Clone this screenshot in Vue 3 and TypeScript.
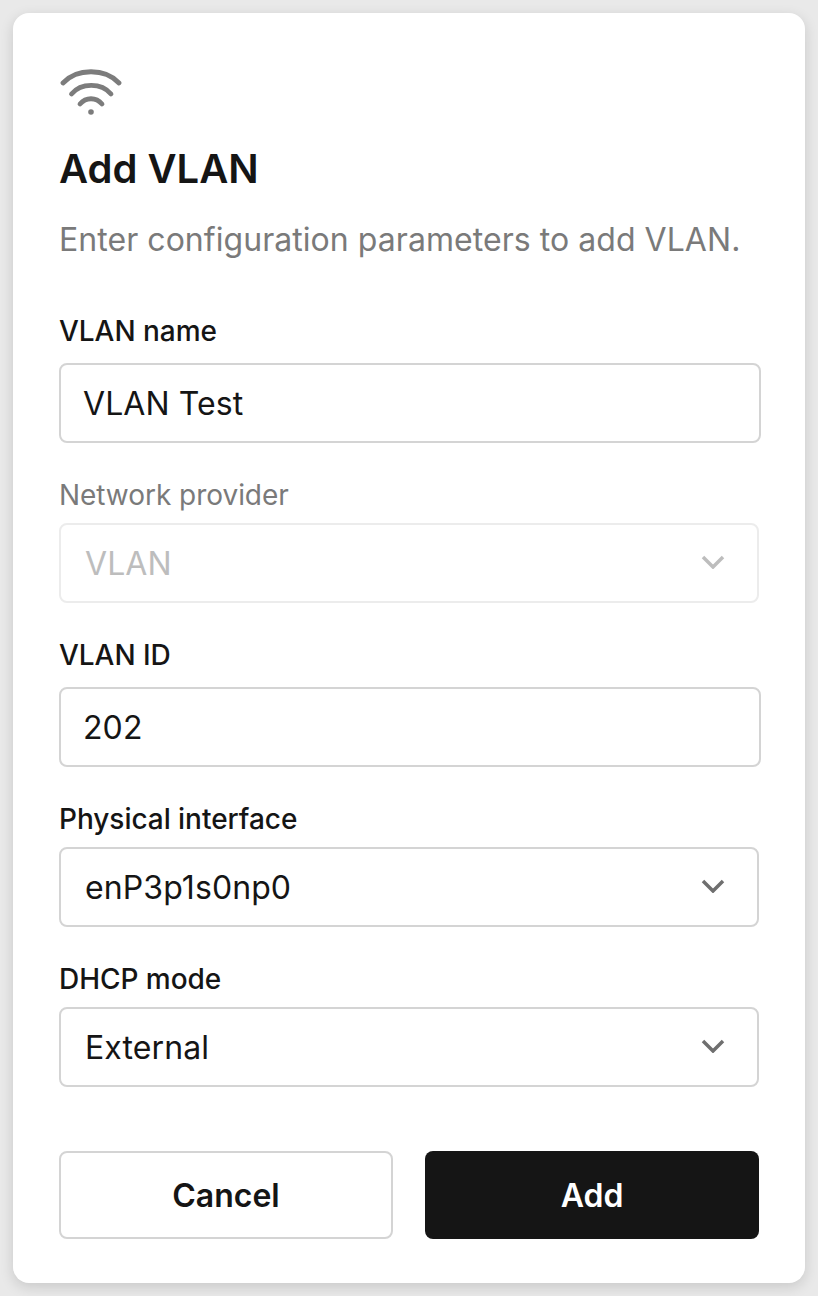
<script setup lang="ts">
import { ref } from "vue";

const vlanName = ref("VLAN Test");
const vlanId = ref("202");
const physicalInterface = ref("enP3p1s0np0");
const dhcpMode = ref("External");
</script>

<template>
  <main class="page">
    <form class="card" @submit.prevent>
      <svg class="wifi" width="62" height="48" viewBox="0 0 62 48" fill="none">
        <path d="M3 15C17 0 45 0 59 15" />
        <path d="M11.5 26C21 14.5 41.5 14.5 51 26" />
        <path d="M20 36C26 29 36 29 42 36" />
        <circle cx="31" cy="44" r="2.8" />
      </svg>
      <h1>Add VLAN</h1>
      <p class="hint">Enter configuration parameters to add VLAN.</p>

      <label class="field first">
        <span class="label">VLAN name</span>
        <input v-model="vlanName" class="control wide" type="text" />
      </label>

      <label class="field tight disabled">
        <span class="label">Network provider</span>
        <span class="select-wrap">
          <select class="control" disabled>
            <option>VLAN</option>
          </select>
          <svg class="chevron" width="24" height="14" viewBox="0 0 24 14" fill="none">
            <path d="M2 2L12 12L22 2" />
          </svg>
        </span>
      </label>

      <label class="field">
        <span class="label">VLAN ID</span>
        <input v-model="vlanId" class="control wide" type="text" />
      </label>

      <label class="field tight">
        <span class="label">Physical interface</span>
        <span class="select-wrap">
          <select v-model="physicalInterface" class="control">
            <option>enP3p1s0np0</option>
          </select>
          <svg class="chevron" width="24" height="14" viewBox="0 0 24 14" fill="none">
            <path d="M2 2L12 12L22 2" />
          </svg>
        </span>
      </label>

      <label class="field tight">
        <span class="label">DHCP mode</span>
        <span class="select-wrap">
          <select v-model="dhcpMode" class="control">
            <option>External</option>
          </select>
          <svg class="chevron" width="24" height="14" viewBox="0 0 24 14" fill="none">
            <path d="M2 2L12 12L22 2" />
          </svg>
        </span>
      </label>

      <div class="actions">
        <button type="button" class="btn cancel">Cancel</button>
        <button type="submit" class="btn add">Add</button>
      </div>
    </form>
  </main>
</template>

<style>
html,
body {
  margin: 0;
  background: #e9e9e9;
}
</style>

<style scoped>
.page {
  box-sizing: border-box;
  width: 818px;
  height: 1296px;
  padding: 13px;
  font-family: Inter, "Liberation Sans", sans-serif;
  color: #151515;
}

.card {
  box-sizing: border-box;
  width: 792px;
  height: 1270px;
  padding: 55px 46px 44px;
  display: flex;
  flex-direction: column;
  background: #fff;
  border-radius: 16px;
  box-shadow: 0 4px 14px rgba(0, 0, 0, 0.14);
}

.wifi {
  display: block;
  margin-left: 1px;
}
.wifi path {
  stroke: #7c7c7c;
  stroke-width: 4.8;
  stroke-linecap: round;
}
.wifi circle {
  fill: #7c7c7c;
}

h1 {
  margin: 27px 0 0;
  font-size: 40px;
  line-height: 52px;
  font-weight: 600;
}

.hint {
  margin: 21px 0 0;
  font-size: 32px;
  line-height: 48px;
  letter-spacing: 0.05px;
  color: #7a7a7a;
}

.field {
  display: flex;
  flex-direction: column;
  gap: 16px;
  margin-top: 36px;
}
.field.first {
  margin-top: 51px;
}
.field.tight {
  gap: 12px;
}

.label {
  font-size: 28px;
  line-height: 32px;
  font-weight: 500;
  letter-spacing: -0.04px;
}

.control {
  box-sizing: border-box;
  display: block;
  width: 700px;
  height: 80px;
  padding: 0 24px;
  border: 2px solid #d4d4d4;
  border-radius: 8px;
  background: #fff;
  font: 400 32px Inter, "Liberation Sans", sans-serif;
  letter-spacing: 0.1px;
  color: #151515;
  outline: none;
  appearance: none;
  opacity: 1;
}
.control.wide {
  width: 702px;
  padding-left: 22px;
}

.select-wrap {
  position: relative;
  display: block;
}
.chevron {
  position: absolute;
  top: 32px;
  right: 34px;
  pointer-events: none;
}
.chevron path {
  stroke: #6f6f6f;
  stroke-width: 3.5;
}

.disabled .label {
  color: #7a7a7a;
  font-weight: 400;
}
.disabled .control {
  border-color: #ececec;
  color: #bdbdbd;
}
.disabled .chevron path {
  stroke: #bdbdbd;
}

.actions {
  display: grid;
  grid-template-columns: 334px 334px;
  gap: 32px;
  margin-top: 64px;
}

.btn {
  height: 88px;
  border-radius: 8px;
  font: 600 32px Inter, "Liberation Sans", sans-serif;
}
.cancel {
  border: 2px solid #d4d4d4;
  background: #fff;
  color: #151515;
}
.add {
  border: none;
  background: #151515;
  color: #fff;
}
</style>
